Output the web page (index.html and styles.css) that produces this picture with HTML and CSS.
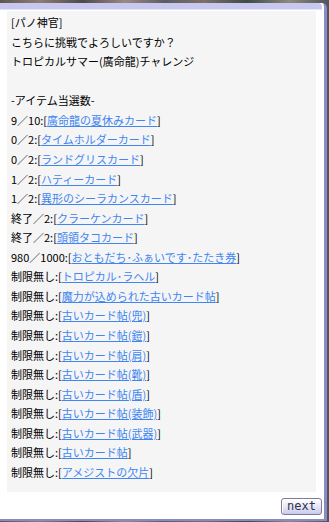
FILE: index.html
```html
<!DOCTYPE html>
<html lang="ja">
<head>
	<meta charset="UTF-8">
	<title>NPC</title>
	<link rel="stylesheet" href="styles.css">
</head>
<body>
	<div class="scene">
		<div class="npcWindow">
			<div class="titleBar"></div>
			<div class="msgPanel">
				<div class="line">[パノ神官]</div>
				<div class="line">こちらに挑戦でよろしいですか？</div>
				<div class="line">トロピカルサマー(廣命龍)チャレンジ</div>
				<div class="line">&nbsp;</div>
				<div class="line">-アイテム当選数-</div>
				<div class="line">9／10:[<a href="#">廣命龍の夏休みカード</a>]</div>
				<div class="line">0／2:[<a href="#">タイムホルダーカード</a>]</div>
				<div class="line">0／2:[<a href="#">ランドグリスカード</a>]</div>
				<div class="line">1／2:[<a href="#">ハティーカード</a>]</div>
				<div class="line">1／2:[<a href="#">異形のシーラカンスカード</a>]</div>
				<div class="line">終了／2:[<a href="#">クラーケンカード</a>]</div>
				<div class="line">終了／2:[<a href="#">頭領タコカード</a>]</div>
				<div class="line">980／1000:[<a href="#">おともだち･ふぁいです･たたき券</a>]</div>
				<div class="line">制限無し:[<a href="#">トロピカル･ラヘル</a>]</div>
				<div class="line">制限無し:[<a href="#">魔力が込められた古いカード帖</a>]</div>
				<div class="line">制限無し:[<a href="#">古いカード帖(兜)</a>]</div>
				<div class="line">制限無し:[<a href="#">古いカード帖(鎧)</a>]</div>
				<div class="line">制限無し:[<a href="#">古いカード帖(肩)</a>]</div>
				<div class="line">制限無し:[<a href="#">古いカード帖(靴)</a>]</div>
				<div class="line">制限無し:[<a href="#">古いカード帖(盾)</a>]</div>
				<div class="line">制限無し:[<a href="#">古いカード帖(装飾)</a>]</div>
				<div class="line">制限無し:[<a href="#">古いカード帖(武器)</a>]</div>
				<div class="line">制限無し:[<a href="#">古いカード帖</a>]</div>
				<div class="line">制限無し:[<a href="#">アメジストの欠片</a>]</div>
			</div>
			<div class="footer">
				<button class="btnNext">next</button>
			</div>
		</div>
	</div>
</body>
</html>
```

FILE: styles.css
```css
body{
	margin: 0px;
}
.scene{
	width: 329px;
	height: 522px;
	overflow: hidden;
	background: linear-gradient(90deg, #5d5650 0%, #8a7f77 12%, #4e4a4a 25%, #9a8a84 38%, #5a5e66 50%, #7d6f6a 62%, #3f4a48 75%, #8c8a80 88%, #50545a 100%);
}
.npcWindow{
	margin-top: 3px;
	width: 324px;
	height: 516px;
	background-color: #ffffff;
	border-right: 3px solid #8c8ac4;
	border-bottom: 2px solid #8c8ac4;
	border-top-right-radius: 5px;
	display: flex;
	flex-direction: column;
}
.titleBar{
	height: 6px;
	background-color: #c8c8ef;
	border-bottom: 1px solid #e2e2f8;
	border-top-right-radius: 4px;
	margin-right: 2px;
}
.msgPanel{
	margin: 1px 0px 0px 7px;
	width: 305px;
	height: 479px;
	padding: 2px 0px 0px 4px;
	background-color: #f5f5f5;
	font-family: "Noto Sans CJK JP", "Noto Sans", sans-serif;
	font-size: 11px;
	line-height: 19.57px;
	color: #000000;
}
.line{
	white-space: nowrap;
}
.msgPanel a{
	color: #3f86f2;
	text-decoration: underline;
}
.footer{
	flex: 1;
	display: flex;
	justify-content: flex-end;
	align-items: flex-start;
	padding: 6px 2px 0px 0px;
}
.btnNext{
	width: 41px;
	height: 17px;
	padding: 0px;
	border: 1px solid #7c7c94;
	border-radius: 3px;
	background: linear-gradient(#ffffff, #e4e4f8 55%, #c9c9ee);
	box-shadow: inset 1px 1px 0px #ffffff;
	font-family: "DejaVu Sans Mono", monospace;
	font-size: 12px;
	color: #333344;
	line-height: 15px;
}
```
